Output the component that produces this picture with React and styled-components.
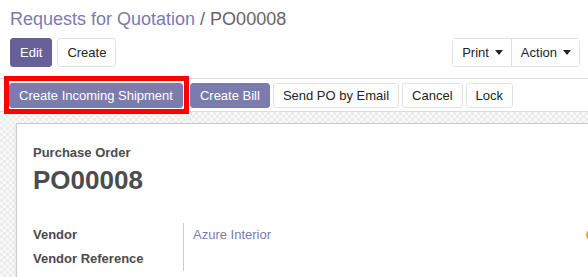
import styled, { createGlobalStyle } from "styled-components";

const GlobalStyle = createGlobalStyle`
  html, body {
    margin: 0;
    padding: 0;
    background: #fff;
    overflow: hidden;
  }
  body {
    font-family: "Liberation Sans", Arial, sans-serif;
    font-size: 13px;
    color: #4c4c4c;
  }
`;

const ControlPanel = styled.div`
  padding: 6px 8px 11px 10px;
  border-bottom: 1px solid #ddd;
`;

const Breadcrumb = styled.div`
  font-size: 18px;
  line-height: 26px;
  color: #666;
  margin-bottom: 6px;
  white-space: nowrap;
  a {
    color: #7c7bad;
    text-decoration: none;
  }
`;

const ButtonRow = styled.div`
  display: flex;
  align-items: center;
  justify-content: space-between;
`;

const Group = styled.div`
  display: flex;
  gap: ${(p) => p.$gap ?? 5}px;
`;

const Button = styled.button`
  position: relative;
  font-family: inherit;
  font-size: 13px;
  height: ${(p) => (p.$small ? 25 : 29)}px;
  padding: 0 9px;
  border-radius: 3px;
  border: 1px solid ${(p) => (p.$primary ? p.$primary : "#dee2e6")};
  background: ${(p) => p.$primary || "#fff"};
  color: ${(p) => (p.$primary ? "#fff" : "#212529")};
  white-space: nowrap;
  cursor: pointer;
`;

const Highlight = styled.span`
  position: absolute;
  top: -8px;
  left: -6px;
  right: -7px;
  bottom: -7px;
  border: 5px solid #f00;
  pointer-events: none;
`;

const Dropdowns = styled.div`
  display: flex;
  border: 1px solid #dee2e6;
  border-radius: 3px;
  height: 29px;
  box-sizing: border-box;
`;

const DropButton = styled.button`
  font-family: inherit;
  font-size: 13px;
  color: #212529;
  background: #fff;
  border: none;
  border-left: ${(p) => (p.$first ? "none" : "1px solid #dee2e6")};
  padding: 0 8px 0 9px;
  display: flex;
  align-items: center;
  gap: 6px;
  &::after {
    content: "";
    border-top: 5px solid #212529;
    border-left: 4px solid transparent;
    border-right: 4px solid transparent;
  }
`;

const StatusBar = styled.div`
  display: flex;
  padding: 4px 9px 3px;
  border-bottom: 1px solid #ddd;
`;

const FormBackground = styled.div`
  padding: 11px 0 0 16px;
  height: 200px;
  background-color: #f4f4f4;
  background-image: repeating-conic-gradient(#ececec 0 25%, #f9f9f9 0 50%);
  background-size: 6px 6px;
`;

const Sheet = styled.div`
  width: 640px;
  min-height: 180px;
  background: #fff;
  border: 1px solid #cac9dc;
  border-right: none;
  padding: 19px 16px;
  box-shadow: 0 2px 4px rgba(0, 0, 0, 0.08);
`;

const Subtitle = styled.div`
  font-weight: bold;
  font-size: 13px;
  line-height: 20px;
  color: #4c4c4c;
`;

const Heading = styled.h1`
  margin: 2px 0 0;
  font-size: 26px;
  line-height: 30px;
  font-weight: bold;
  color: #4c4c4c;
`;

const Groups = styled.div`
  display: flex;
  margin-top: 28px;
`;

const FieldGrid = styled.div`
  display: grid;
  grid-template-columns: 150px 1fr;
  width: 553px;
`;

const Label = styled.div`
  font-weight: bold;
  line-height: 24px;
  color: #4c4c4c;
  padding-right: 8px;
`;

const Value = styled.div`
  border-left: 1px solid #ccc;
  padding-left: 9px;
  line-height: 24px;
  color: #7c7bad;
`;

const Marker = styled.span`
  display: inline-block;
  width: 8px;
  height: 8px;
  margin-top: 6px;
  border-radius: 50%;
  border: 2px solid #f0a32c;
`;

export default function App() {
  return (
    <>
      <GlobalStyle />
      <ControlPanel>
        <Breadcrumb>
          <a href="#">Requests for Quotation</a> / PO00008
        </Breadcrumb>
        <ButtonRow>
          <Group>
            <Button $primary="#675f99">Edit</Button>
            <Button>Create</Button>
          </Group>
          <Dropdowns>
            <DropButton $first>Print</DropButton>
            <DropButton>Action</DropButton>
          </Dropdowns>
        </ButtonRow>
      </ControlPanel>
      <StatusBar>
        <Group $gap={3}>
          <Button $small $primary="#7c7bad">
            Create Incoming Shipment
            <Highlight />
          </Button>
          <Button $small $primary="#7c7bad" style={{ marginLeft: 4 }}>
            Create Bill
          </Button>
          <Button $small>Send PO by Email</Button>
          <Button $small>Cancel</Button>
          <Button $small>Lock</Button>
        </Group>
      </StatusBar>
      <FormBackground>
        <Sheet>
          <Subtitle>Purchase Order</Subtitle>
          <Heading>PO00008</Heading>
          <Groups>
            <FieldGrid>
              <Label>Vendor</Label>
              <Value>Azure Interior</Value>
              <Label>Vendor Reference</Label>
              <Value />
            </FieldGrid>
            <Marker />
          </Groups>
        </Sheet>
      </FormBackground>
    </>
  );
}
